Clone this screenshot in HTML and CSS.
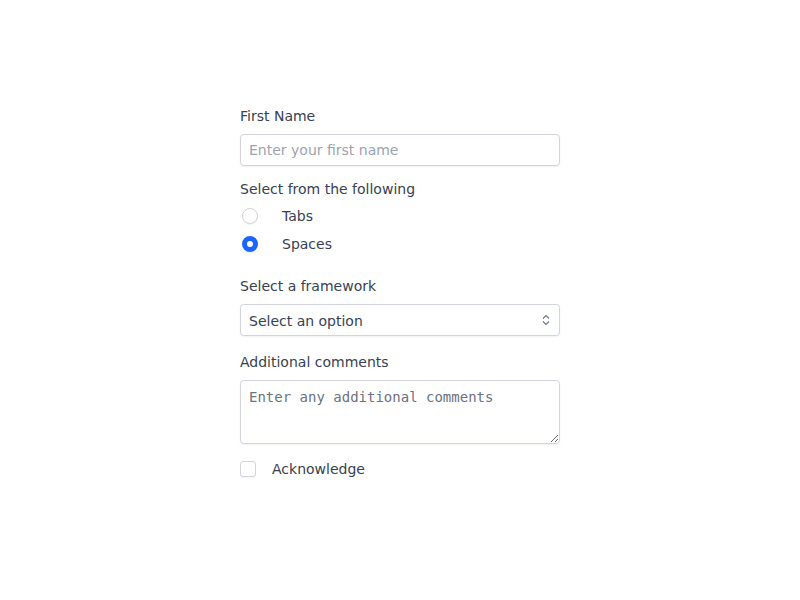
FILE: index.html
```html
<!DOCTYPE html>
<html>
<head>
<meta charset="utf-8">
<link rel="stylesheet" href="styles.css">
</head>
<body>
<form class="form">
  <div class="field">
    <label class="label" for="fn">First Name</label>
    <input class="input" id="fn" type="text" placeholder="Enter your first name">
  </div>
  <div class="field">
    <div class="label">Select from the following</div>
    <div class="radios">
      <label class="radio-row"><span class="radio"></span><span>Tabs</span></label>
      <label class="radio-row"><span class="radio checked"></span><span>Spaces</span></label>
    </div>
  </div>
  <div class="field framework">
    <label class="label">Select a framework</label>
    <div class="select">
      <span class="select-text">Select an option</span>
      <svg class="chev" width="10" height="16" viewBox="0 0 10 16"><path d="M2 6.5 L5 3.5 L8 6.5 M2 9.5 L5 12.5 L8 9.5" fill="none" stroke="#6b7280" stroke-width="1.1"/></svg>
    </div>
  </div>
  <div class="field">
    <label class="label" for="cm">Additional comments</label>
    <textarea class="textarea" id="cm" placeholder="Enter any additional comments"></textarea>
  </div>
  <label class="check-row"><span class="checkbox"></span><span>Acknowledge</span></label>
</form>
</body>
</html>
```
FILE: styles.css
```css
html, body { margin: 0; padding: 0; background: #fff; }
body {
  font-family: "DejaVu Sans", sans-serif;
  font-size: 14px;
  line-height: 20px;
  color: #374151;
}
.form {
  width: 320px;
  margin: 0 auto;
  padding-top: 106px;
  display: flex;
  flex-direction: column;
}
.field { display: flex; flex-direction: column; margin-bottom: 13px; }
.label { display: block; margin-bottom: 8px; color: #374151; }
.input, .select, .textarea {
  box-sizing: border-box;
  width: 320px;
  border: 1px solid #d1d5db;
  border-radius: 4px;
  box-shadow: 0 1px 2px rgba(0,0,0,0.06);
  background: #fff;
  font-family: "DejaVu Sans", sans-serif;
  font-size: 14px;
  color: #374151;
}
.input { height: 32px; padding: 0 8px; outline: none; }
.input::placeholder { color: #9ca3af; }
.radios { display: flex; flex-direction: column; gap: 8px; margin-top: -1px; }
.radio-row { display: flex; align-items: center; height: 20px; gap: 24px; padding-left: 2px; }
.radio {
  box-sizing: border-box;
  width: 16px; height: 16px;
  border-radius: 50%;
  border: 1px solid #d1d5db;
  background: #fff;
  box-shadow: 0 1px 1px rgba(0,0,0,0.05);
}
.radio.checked { border: 5px solid #1a66ff; background: #fff; }
.framework { margin-top: 9px; margin-bottom: 16px; }
.select {
  height: 32px;
  padding: 0 8px 0 8px;
  display: flex;
  align-items: center;
  justify-content: space-between;
}
.select-text { position: relative; top: 1px; }
.textarea {
  height: 64px;
  padding: 6px 8px;
  font-family: "DejaVu Sans Mono", monospace;
  font-size: 14px;
  line-height: 20px;
  resize: vertical;
  outline: none;
  display: block;
}
.textarea::placeholder { color: #6b7280; }
.check-row { display: flex; align-items: center; gap: 16px; height: 20px; margin-top: 2px; }
.checkbox {
  box-sizing: border-box;
  width: 16px; height: 16px;
  border: 1px solid #d1d5db;
  border-radius: 3px;
  background: #fff;
  box-shadow: 0 1px 1px rgba(0,0,0,0.05);
}
```
